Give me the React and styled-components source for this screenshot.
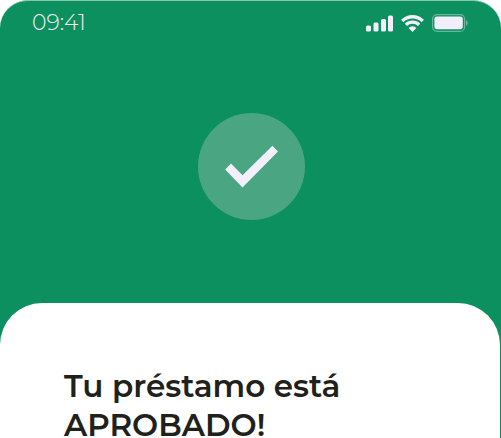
import React from 'react';
import styled, { createGlobalStyle } from 'styled-components';

const GlobalStyle = createGlobalStyle`
  * {
    box-sizing: border-box;
  }

  body {
    margin: 0;
    background: #ffffff;
    font-family: 'Montserrat', 'Inter', sans-serif;
  }
`;

const Screen = styled.main`
  display: flex;
  flex-direction: column;
  min-height: 100vh;
  overflow: hidden;
  background: #0c9060;
  border-top: 1px solid #86c7af;
  border-radius: 28px 28px 0 0;
`;

const StatusBar = styled.header`
  display: flex;
  align-items: center;
  justify-content: space-between;
  padding: 10px 33px 0 32px;
`;

const Time = styled.time`
  font-size: 22px;
  line-height: 24px;
  font-weight: 300;
  color: #f2effa;
`;

const StatusIcons = styled.div`
  display: flex;
  align-items: center;
  gap: 8px;
`;

const Hero = styled.section`
  display: flex;
  justify-content: center;
  padding: 78px 0 83px 2px;
`;

const CheckBadge = styled.div`
  display: flex;
  align-items: center;
  justify-content: center;
  width: 107px;
  height: 107px;
  border-radius: 50%;
  background: #4aa582;
`;

const Card = styled.section`
  flex: 1;
  margin-right: 1px;
  padding: 64px 64px 0;
  background: #ffffff;
  border-radius: 42px 42px 0 0;
`;

const Title = styled.h1`
  margin: 0;
  font-size: 31px;
  line-height: 39px;
  font-weight: 600;
  color: #20211b;
`;

const SignalIcon = () => (
  <svg width="27" height="17" viewBox="0 0 27 17" fill="#f2effa" aria-hidden="true">
    <rect x="0" y="10.5" width="5" height="6" rx="1.5" />
    <rect x="7.5" y="7.5" width="5" height="9" rx="1.5" />
    <rect x="15" y="4" width="5" height="12.5" rx="1.5" />
    <rect x="22" y="0.5" width="5" height="16" rx="1.5" />
  </svg>
);

const WifiIcon = () => (
  <svg width="23" height="17" viewBox="0 0 23 17" fill="none" aria-hidden="true">
    <path d="M1.2 6 A14.6 14.6 0 0 1 21.8 6" stroke="#f2effa" strokeWidth="3.3" />
    <path d="M4.9 9.8 A9.3 9.3 0 0 1 18.1 9.8" stroke="#f2effa" strokeWidth="3.2" />
    <path d="M7.6 12.9 A5.6 5.6 0 0 1 15.4 12.9 L11.5 16.9 Z" fill="#f2effa" />
  </svg>
);

const BatteryIcon = () => (
  <svg width="36" height="18" viewBox="0 0 36 18" fill="none" aria-hidden="true">
    <rect x="0.6" y="0.6" width="32" height="16.8" rx="4.5" stroke="#f2effa" strokeOpacity="0.4" strokeWidth="1.2" />
    <rect x="2.4" y="2.6" width="28.4" height="12.6" rx="2.6" fill="#f2effa" />
    <path d="M34 6.3 C36.2 7.2 36.2 10.6 34 11.5 Z" fill="#f2effa" fillOpacity="0.45" />
  </svg>
);

const CheckIcon = () => (
  <svg width="53" height="43" viewBox="0 0 53 43" fill="#f2effa" aria-hidden="true">
    <path d="M0.2 24.4 L6 18.4 L17.5 30.2 L47.4 0.7 L53 6.6 L17.5 42.6 Z" />
  </svg>
);

export default function App() {
  return (
    <>
      <GlobalStyle />
      <Screen>
        <StatusBar>
          <Time>09:41</Time>
          <StatusIcons>
            <SignalIcon />
            <WifiIcon />
            <BatteryIcon />
          </StatusIcons>
        </StatusBar>
        <Hero>
          <CheckBadge>
            <CheckIcon />
          </CheckBadge>
        </Hero>
        <Card>
          <Title>
            Tu préstamo está
            <br />
            APROBADO!
          </Title>
        </Card>
      </Screen>
    </>
  );
}
